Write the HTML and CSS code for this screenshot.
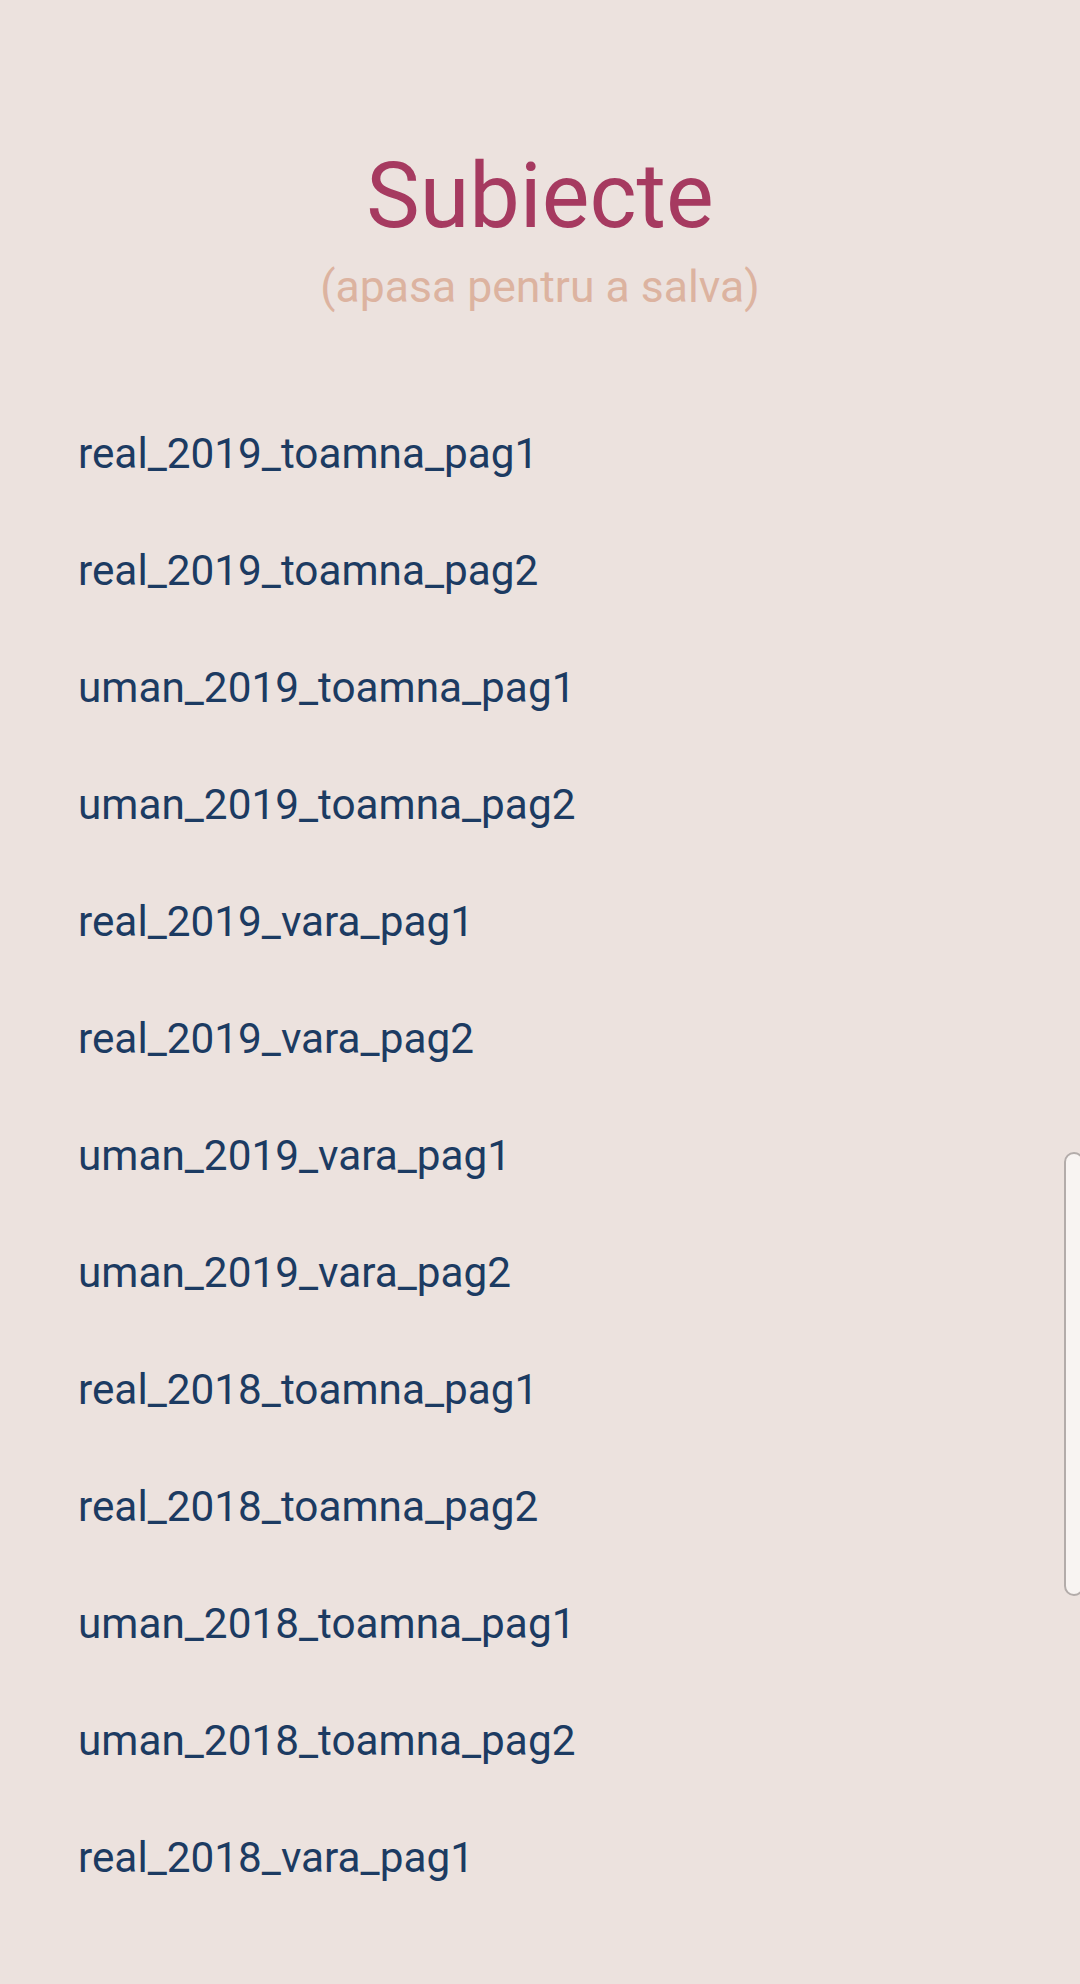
FILE: index.html
```html
<!DOCTYPE html>
<html>
<head>
    <title>Subiecte</title>
    <meta name="viewport" content="width=device-width, initial-scale=1.0">
    <link rel="stylesheet" href="styles.css">
</head>
<body>
    <div class="header">
        <h1>Subiecte</h1>
        <p class="hint">(apasa pentru a salva)</p>
    </div>
    <ul class="lista">
        <li>real_2019_toamna_pag1</li>
        <li>real_2019_toamna_pag2</li>
        <li>uman_2019_toamna_pag1</li>
        <li>uman_2019_toamna_pag2</li>
        <li>real_2019_vara_pag1</li>
        <li>real_2019_vara_pag2</li>
        <li>uman_2019_vara_pag1</li>
        <li>uman_2019_vara_pag2</li>
        <li>real_2018_toamna_pag1</li>
        <li>real_2018_toamna_pag2</li>
        <li>uman_2018_toamna_pag1</li>
        <li>uman_2018_toamna_pag2</li>
        <li>real_2018_vara_pag1</li>
    </ul>
    <div class="edge-handle"></div>
</body>
</html>
```

FILE: styles.css
```css
html, body {
    margin: 0;
    padding: 0;
    height: 100%;
}
body {
    font-family: Roboto, 'Noto Sans', Arial, sans-serif;
    background-color: #ece2de;
    position: relative;
    overflow: hidden;
}
.header {
    padding-top: 143px;
    text-align: center;
}
h1 {
    margin: 0;
    font-size: 90px;
    font-weight: 400;
    line-height: 108px;
    color: #a63a60;
}
.hint {
    margin: 12px 0 0;
    font-size: 44.5px;
    line-height: 49px;
    color: #dcb3a0;
}
.lista {
    list-style: none;
    margin: 83px 0 0;
    padding: 0 0 0 78px;
}
.lista li {
    font-size: 42.3px;
    line-height: 117px;
    color: #1c3b62;
}
.edge-handle {
    position: absolute;
    right: -4px;
    top: 1152px;
    width: 16px;
    height: 440px;
    background: #f8f4f2;
    border: 2px solid #b3acaa;
    border-radius: 12px;
}
```
